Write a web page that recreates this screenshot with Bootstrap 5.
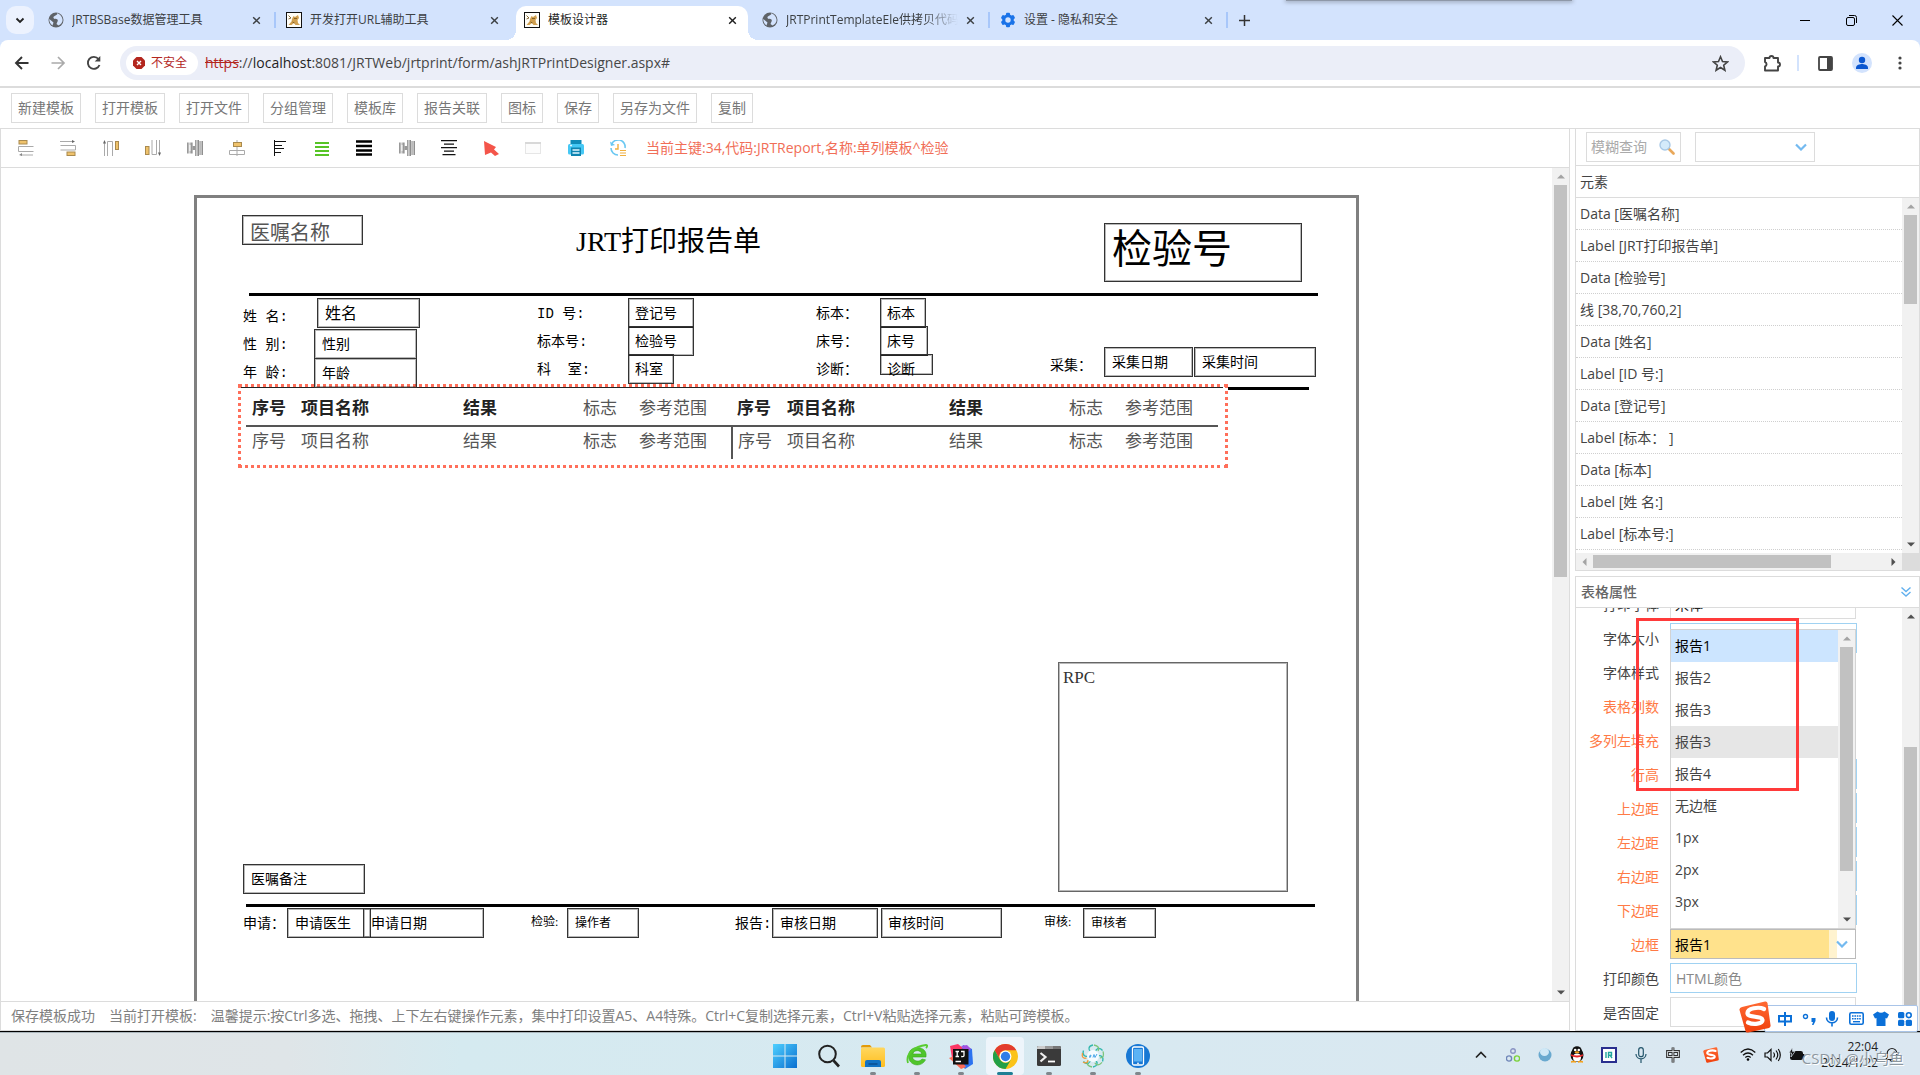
<!DOCTYPE html>
<html lang="zh-CN">
<head>
<meta charset="utf-8">
<meta name="viewport" content="width=device-width, initial-scale=1">
<title>模板设计器</title>
<link href="https://cdn.jsdelivr.net/npm/bootstrap@5.3.0/dist/css/bootstrap.min.css" rel="stylesheet">
<style>
:root{--ui:"Open Sans","Noto Sans CJK SC",sans-serif;--song:"Liberation Serif","Noto Sans CJK SC",serif;--songm:"Liberation Mono","Noto Sans CJK SC",monospace;--line:#dcdcdc}
body{font-family:var(--ui);font-size:14px;line-height:20px;color:#444}
svg{display:block;flex:none}
button{font-family:inherit}
.plain{border:0;background:none;padding:0;color:inherit}
/* browser frame */
.tabstrip{height:40px;background:#d3e3fd;padding-left:6px;color:#3c4043}
.tabsearch{width:28px;height:28px;border-radius:10px;background:#ecf2fe;margin-right:3px}
.btab{width:238px;height:40px;padding:0 14px 0 11px;gap:8px;font-size:12px;position:relative;align-items:center}
.btab .ttl{flex:1 1 0;min-width:0;overflow:hidden;white-space:nowrap;line-height:20px}
.btab>*{position:relative;z-index:1}
.btab.sep::after{content:"";position:absolute;right:-1px;top:12px;width:2px;height:16px;background:#a8c7fa}
.btab.act{color:#1f1f1f}
.btab.act::before{content:"";position:absolute;z-index:0;left:3px;right:3px;top:6px;bottom:0;background:#fff;border-radius:10px 10px 0 0}
.btab.act::after{content:"";position:absolute;z-index:0;left:-7px;right:-7px;bottom:0;height:10px;background:radial-gradient(circle at 0 0,transparent 10px,#fff 10px) left/10px 10px no-repeat,radial-gradient(circle at 100% 0,transparent 10px,#fff 10px) right/10px 10px no-repeat}
.fade-r{-webkit-mask-image:linear-gradient(90deg,#000 80%,transparent);mask-image:linear-gradient(90deg,#000 80%,transparent)}
.winctl{gap:35px;padding-right:17px}
.overtop{position:absolute;top:0;right:348px;width:286px;height:1px;background:#8e98a8;box-shadow:0 0 4px 1px #8e98a8}
.navrow{background:#d3e3fd}
.navbar-in{height:46px;background:#fff;border-radius:8px 8px 0 0;padding:0 14px;color:#474747}
.fwd{margin:0 20px}
.reload{margin-right:18px}
.omni{height:34px;border-radius:17px;background:#ebeef8;padding:0 16px 0 6px;min-width:0}
.chip{height:24px;width:72px;border-radius:12px;background:#fff;color:#b3261e;font-size:12px;gap:6px;padding-left:7px;margin-right:7px}
.url{color:#474747;white-space:nowrap}
.url b{font-weight:400;color:#1f1f1f}
.url s{color:#b3261e}
.extset{padding-left:18px}
.bar2{width:2px;height:16px;background:#d3e3fd;margin:0 19px 0 16px}
.avatar{margin:0 26px 0 19px}
/* designer */
.topbar{height:43px;border-top:2px solid var(--line);border-bottom:1px solid var(--line);padding:0 11px;gap:14px;background:#fff}
.tbtn{height:30px;padding:0 6px;border:1px solid var(--line);border-radius:0;background:#fff;color:#777;font-size:14px;line-height:26px;white-space:nowrap}
.workarea{min-height:0;gap:5px}
.leftpane{border:solid var(--line);border-width:0 1px 1px;min-width:0}
.icobar{height:39px;border-bottom:1px solid var(--line);padding:0 0 1px 17px}
.icoset{width:608px;margin-right:20px}
.cur{color:#f16e57}
.canvas{min-height:0;overflow:hidden}
.stage{min-width:0;overflow:hidden}
.statusbar{height:29px;border-top:1px solid var(--line);padding:0 10px;color:#808080;gap:14px;white-space:nowrap}
.vsb{width:17px;background:#f1f1f1;flex:none;color:#505050}
.thumb{width:13px;background:#c1c1c1}
.arw{height:17px;width:17px;display:flex;align-items:center;justify-content:center}
.arw.off{color:#a3a3a3}
.th-page{height:392px}.th-list{height:89px}.th-drop{height:224px}.th-form{height:270px;margin-top:122px}
/* report page */
.paper{width:1165px;height:1640px;margin:27px auto 0;border:3px solid #808080;position:relative;color:#000;font-family:var(--song);background:#fff}
.lab,.fld,.rule{position:absolute;white-space:pre}
.lab{line-height:20px;font-family:var(--songm)}
.fld{border:1px solid #333;outline:1px solid rgba(0,0,0,.28);outline-offset:-2px;height:30px;line-height:30px;padding-left:7px}
.rule{background:#000;height:3px}
.t12{font-size:12px;font-family:var(--song)}
#d-order{left:45px;top:17px;width:121px;font-size:20px;line-height:35px;color:#555}
#l-title{left:379px;top:28px;font-size:28px;line-height:32px;color:#000;font-family:var(--song)}
#d-no{left:907px;top:25px;width:198px;height:59px;font-size:40px;line-height:52px}
#r1{left:52px;top:95px;width:1069px}
#l-xm{left:46px;top:109px}#l-xb{left:46px;top:137px}#l-nl{left:46px;top:165px}
#d-xm{left:120px;top:100px;width:103px;font-size:16px}
#d-xb{left:117px;top:131px;width:103px}#d-nl{left:117px;top:160px;width:103px;z-index:1}
#l-id{left:340px;top:106px}#l-bbh{left:340px;top:134px}#l-ks{left:340px;top:162px}
#d-djh{left:431px;top:100px;width:66px;padding-left:6px}#d-jyh{left:431px;top:128px;width:66px;padding-left:6px}#d-ks{left:431px;top:156px;width:46px;padding-left:6px}
#l-bb{left:619px;top:106px}#l-ch{left:619px;top:134px}#l-zd{left:619px;top:162px}
#d-bb{left:683px;top:100px;width:46px;padding-left:6px}#d-ch{left:683px;top:128px;width:48px;padding-left:6px}#d-zd{left:683px;top:156px;width:53px;height:21px;padding-left:6px}
#l-cj{left:853px;top:158px}
#d-cjrq{left:907px;top:149px;width:89px}#d-cjsj{left:997px;top:149px;width:122px}
#r2{left:45px;top:189px;width:1067px}
.gridbox{position:absolute;left:41px;top:186px;width:990px;height:84px;border:3px dotted #ff6f5a;background:#fff;color:#444;font-size:17px;padding-left:5px}
.gridbox::before{content:"";position:absolute;left:0;right:2px;top:0;height:1px;background:#222}
.rtab{width:972px;table-layout:fixed;border-collapse:separate;border-spacing:0;color:#555}
.rtab th,.rtab td{padding:0 0 0 6px;font-weight:400;text-align:left;white-space:nowrap;line-height:24px}
.rtab th{height:40px;border-bottom:2px solid #555;padding-top:6px}
.rtab td{height:32px;padding-bottom:2px}
.rtab .hb{font-weight:700;color:#222}
.rtab .split{border-left:2px solid #555;padding-left:5px}
.c1{width:49px}.c2{width:162px}.c3{width:120px}.c4{width:56px}.c5{width:98px}.c6{width:50px}
#d-rpc{left:861px;top:464px;width:230px;height:230px;border-color:#666;padding-left:4px;font-size:17px;color:#333}
#d-bz{left:46px;top:666px;width:122px}
#r3{left:49px;top:706px;width:1069px}
#l-sq{left:46px;top:716px}#d-sqys{left:90px;top:710px;width:84px}#d-sqrq{left:166px;top:710px;width:121px}
#l-jy{left:334px;top:714px}#d-czz{left:370px;top:710px;width:72px;line-height:28px}
#l-bg{left:538px;top:716px}#d-shrq{left:575px;top:710px;width:106px}#d-shsj{left:684px;top:710px;width:121px;padding-left:6px}
#l-sh{left:847px;top:714px}#d-shz{left:886px;top:710px;width:73px;line-height:28px}
/* right column */
.rightpane{width:345px;gap:5px;position:relative;flex:none}
.pbox{border:1px solid var(--line);border-top:0;min-height:0}
.qbar{height:37px;border-bottom:1px solid var(--line);padding:3px 0 0 10px;gap:14px}
.qbox{width:95px;height:30px;border:1px solid var(--line);padding:0 5px 0 4px}
.qbox input{width:60px;border:0;padding:0;outline:0;background:none}
.qbox input::placeholder{color:#aaa}
.qsel{width:120px;height:30px;border:1px solid var(--line);border-radius:0;background:#fff;appearance:none;display:block}
.selwrap{position:relative}
.selwrap svg{position:absolute;right:8px;top:11px;pointer-events:none}
.eh{height:32px;border-bottom:1px solid var(--line);padding:6px 4px}
.elist{height:355px}
.elist ul{overflow:hidden;min-width:0}
.elist li{height:32px;border-bottom:1px dotted #cfcfcf;padding:6px 4px 0;white-space:pre}
.hsb{height:17px;background:#f1f1f1;color:#505050}
.hsb .thumb{height:13px;width:238px}
.corner{width:17px;background:#dcdcdc}
.phead{height:32px;border:solid var(--line);border-width:1px 0;padding:0 8px 0 5px;color:#666;font-weight:500}
.pbody{min-height:0;position:relative}
.pform{overflow:hidden;min-width:0}
.prow{height:30px;margin-bottom:4px;position:relative}
.prow:first-child{margin-top:-19px}
.prow label{width:84px;text-align:right;padding:2px 1px 0 0;margin-right:10px;white-space:nowrap}
.prow.hot label{color:#ff7a45}
.prow input{width:187px;height:30px;border:1px solid #a0d2f2;border-radius:0;padding:0 5px;color:#222;outline:0;background:#fff}
.prow input.cmb{width:186px;border-color:var(--line);padding:0 4px}
.prow input.on{border-color:#bbb;color:#000;background:linear-gradient(90deg,#ffe28c 158px,#fff3cf 158px,#fff3cf 166px,#fff 166px)}
.prow input::placeholder{color:#888;opacity:1}
.chev{position:absolute;left:260px;top:11px}
.droplist{position:absolute;z-index:3;left:94px;bottom:30px;width:186px;height:300px;border:1px solid #d3d3d3;background:#fff}
.droplist ul{min-width:0}
.droplist li{height:32px;padding:6px 4px}
.droplist .sel{background:#cce5ff;color:#000}
.droplist .hov{background:#e6e6e6}
.redbox{position:absolute;z-index:4;left:60px;top:10px;width:163px;height:173px;border:3px solid #ff3a3a}
.ime{position:absolute;z-index:5;right:2px;bottom:-1px;width:154px;height:27px;background:#fff;border:1px solid #a9c4e8;border-radius:2px;padding:0 5px 0 12px}
.ime .sg{position:absolute;left:-26px;bottom:-2px}
/* taskbar */
.taskbar{height:44px;border-top:1px solid #000;background:linear-gradient(90deg,#dfe4e6 0,#dfe5e8 15%,#d5eaf0 24%,#d8e9f1 60%,#dbe7f1 100%);box-shadow:inset 0 1px 0 #a9b4ba;position:relative;flex:none;padding-left:2px}
.apps{width:391px}
.app{width:38px;height:38px;margin-top:5px;border-radius:4px;position:relative;display:flex;align-items:center;justify-content:center}
.app.run::after{content:"";position:absolute;bottom:0;left:16px;width:6px;height:3px;border-radius:2px;background:#7f878c}
.app.cur-app{background:#eef5fb}
.app.cur-app::after{left:11px;width:16px;background:#1f7f95}
.tray{position:absolute;right:21px;top:2px;bottom:0;color:#222}
.trayset>span{width:32px;display:flex;justify-content:center}
.traysg{margin:0 21px 0 14px}
.sysset{gap:8px}
.clock{width:73px;text-align:right;font-size:12px;line-height:16px;color:#222;margin-right:7px}
.wm{position:absolute;right:-5px;top:14px;font-size:15px;line-height:20px;color:#8d979f;text-shadow:1px 1px 0 #fff;white-space:nowrap}
</style>
<script src="https://cdn.jsdelivr.net/npm/bootstrap@5.3.0/dist/js/bootstrap.bundle.min.js"></script>
</head>
<body class="vh-100 d-flex flex-column overflow-hidden m-0">
<svg width="0" height="0" class="position-absolute">
<defs>
<linearGradient id="gm" x1="0" x2="1"><stop offset="0" stop-color="#8a8a8a"/><stop offset=".45" stop-color="#d6d6d6"/><stop offset="1" stop-color="#777"/></linearGradient>
<linearGradient id="gw" x1="0" y1="0" x2="1" y2="1"><stop offset="0" stop-color="#4fd0ff"/><stop offset="1" stop-color="#0a6fd0"/></linearGradient>
<linearGradient id="gf" x1="0" y1="0" x2="0" y2="1"><stop offset="0" stop-color="#ffd75e"/><stop offset="1" stop-color="#ffbe1f"/></linearGradient>
<linearGradient id="gs" x1="0" y1="0" x2="0" y2="1"><stop offset="0" stop-color="#ff6a33"/><stop offset="1" stop-color="#f0400d"/></linearGradient>
<symbol id="x" viewBox="0 0 10 10"><path d="M1.300 1.300l7.400 7.400M8.700 1.300L1.300 8.700" stroke="currentColor" stroke-width="1.600" fill="none"/></symbol>
<symbol id="globe" viewBox="0 0 16 16"><circle cx="8" cy="8" r="7.500" fill="#5f6368"/><path d="M9 1.200c1 1-.5 1.800-1.500 2.300S5 4.500 5.500 6s3 .5 4 1.500S9 10.500 8.500 12l2 1.500C13 12.500 14.500 10.500 14.600 8 14.500 5 12 1.800 9 1.200zM1.300 7l4.200 3.500-1 3C2.500 12 1 9.500 1.300 7z" fill="#d3e3fd"/></symbol>
<symbol id="cat" viewBox="0 0 16 16"><rect x=".5" y=".5" width="15" height="15" fill="#fffef8" stroke="#111"/><path d="M7.500 4l1.500 1L12 3l1 3-1.500 2 .5 3 2 2h-4.500L8 11l-2.500 2H2.500L5.500 9.500 6 7z" fill="#d1a050"/><path d="M2.500 3.500L5 6l-2.500 1M8 6.500h3M6.500 10l2 1" stroke="#7a5a22" stroke-width=".9" fill="none"/></symbol>
<symbol id="up" viewBox="0 0 8 5"><path d="M0 4.500L4 .5l4 4z" fill="currentColor"/></symbol>
<symbol id="dn" viewBox="0 0 8 5"><path d="M0 .5l4 4 4-4z" fill="currentColor"/></symbol>
<symbol id="chv" viewBox="0 0 12 8"><path d="M1 1.500l5 5 5-5" fill="none" stroke="#74baf0" stroke-width="2.200"/></symbol>
<symbol id="cols" viewBox="0 0 16 16"><path d="M0 2.500h5.500v11H0z" fill="url(#gm)"/><path d="M2 5h1.500v6H2z" fill="#eee"/><rect x="5.500" y="6" width="3" height="4" fill="#999"/><rect x="8" y="0" width="4" height="16" fill="url(#gm)"/><rect x="12.500" y="1" width="3.500" height="14" fill="url(#gm)"/></symbol>
<symbol id="sogou" viewBox="0 0 32 32"><path d="M3 6L26 .5q2-.5 2.500 1.500l3 22q.5 2-1.500 3L9 31.500q-2 .5-2.500-1.500L.5 9Q0 7 3 6z" fill="url(#gs)"/><path d="M25 8C20 5.500 8 7 8.500 12.500 9 17 23 14.500 23.500 19c.3 4-9 5-14.500 2.500" fill="none" stroke="#fff" stroke-width="4.200" stroke-linecap="round"/></symbol>
</defs>
</svg>

<header class="flex-shrink-0 position-relative">
 <div class="tabstrip d-flex align-items-center">
  <button class="plain tabsearch d-flex align-items-center justify-content-center" aria-label="搜索标签页"><svg width="10" height="7" viewBox="0 0 10 7"><path d="M1.500 1.500L5 5l3.500-3.500" fill="none" stroke="#222" stroke-width="1.800"/></svg></button>
  <div class="btab sep d-flex"><svg width="16" height="16"><use href="#globe"/></svg><span class="ttl">JRTBSBase数据管理工具</span><button class="plain" aria-label="关闭"><svg width="9" height="9"><use href="#x"/></svg></button></div>
  <div class="btab d-flex"><svg width="16" height="16"><use href="#cat"/></svg><span class="ttl">开发打开URL辅助工具</span><button class="plain" aria-label="关闭"><svg width="9" height="9"><use href="#x"/></svg></button></div>
  <div class="btab act d-flex"><svg width="16" height="16"><use href="#cat"/></svg><span class="ttl">模板设计器</span><button class="plain" aria-label="关闭"><svg width="9" height="9"><use href="#x"/></svg></button></div>
  <div class="btab sep d-flex"><svg width="16" height="16"><use href="#globe"/></svg><span class="ttl fade-r">JRTPrintTemplateEle供拷贝代码</span><button class="plain" aria-label="关闭"><svg width="9" height="9"><use href="#x"/></svg></button></div>
  <div class="btab sep d-flex"><svg width="16" height="16" viewBox="0 0 16 16"><g fill="#1a73e8"><circle cx="8" cy="8" r="5.800"/><g id="tth"><rect x="6" y="0.800" width="4" height="14.400" rx="1"/></g><use href="#tth" transform="rotate(60 8 8)"/><use href="#tth" transform="rotate(120 8 8)"/></g><circle cx="8" cy="8" r="2.700" fill="#d3e3fd"/></svg><span class="ttl">设置 - 隐私和安全</span><button class="plain" aria-label="关闭"><svg width="9" height="9"><use href="#x"/></svg></button></div>
  <button class="plain ms-2 ps-1" aria-label="新标签页"><svg width="11" height="11" viewBox="0 0 11 11"><path d="M5.500 0v11M0 5.500h11" stroke="#333" stroke-width="1.500"/></svg></button>
  <div class="winctl ms-auto d-flex align-items-center">
   <button class="plain" aria-label="最小化"><svg width="11" height="11" viewBox="0 0 11 11"><path d="M0 5.500h10" stroke="#000"/></svg></button>
   <button class="plain" aria-label="还原"><svg width="11" height="11" viewBox="0 0 11 11"><rect x=".5" y="2.500" width="8" height="8" rx="1.500" fill="none" stroke="#000"/><path d="M3 .5h5.500a2 2 0 0 1 2 2V8" fill="none" stroke="#000"/></svg></button>
   <button class="plain" aria-label="关闭窗口"><svg width="11" height="11" viewBox="0 0 11 11"><path d="M.5.500l10 10M10.500.500l-10 10" stroke="#000" stroke-width="1.100"/></svg></button>
  </div>
 </div>
 <div class="overtop"></div>
 <div class="navrow"><div class="navbar-in d-flex align-items-center">
  <button class="plain" aria-label="后退"><svg width="16" height="16" viewBox="0 0 16 16"><path d="M14.500 8H2.500M8 2L2 8l6 6" fill="none" stroke="#333" stroke-width="1.900"/></svg></button>
  <button class="plain fwd" aria-label="前进"><svg width="16" height="16" viewBox="0 0 16 16"><path d="M1.500 8h12M8 2l6 6-6 6" fill="none" stroke="#aaa" stroke-width="1.700"/></svg></button>
  <button class="plain reload" aria-label="刷新"><svg width="16" height="16" viewBox="0 0 16 16"><path d="M13.500 10A6 6 0 1 1 12.500 4" fill="none" stroke="#444" stroke-width="1.900"/><path d="M14.300 1v5.600H8.700z" fill="#444"/></svg></button>
  <div class="omni flex-grow-1 d-flex align-items-center">
   <span class="chip d-flex align-items-center"><svg width="12" height="12" viewBox="0 0 12 12"><path d="M3.500 0h5L12 3.500v5L8.500 12h-5L0 8.500v-5z" fill="#b3261e"/><path d="M4 4l4 4M8 4l-4 4" stroke="#fff" stroke-width="1.400"/></svg>不安全</span>
   <span class="url flex-grow-1"><s>https</s>://<b>localhost</b>:8081/JRTWeb/jrtprint/form/ashJRTPrintDesigner.aspx#</span>
   <svg width="17" height="17" viewBox="0 0 17 17"><path d="M8.500 1.800l2 4.700 5 .4-3.800 3.300 1.200 5-4.400-2.700-4.400 2.700 1.200-5L1.500 6.900l5-.4z" fill="none" stroke="#444" stroke-width="1.600"/></svg>
  </div>
  <div class="extset d-flex align-items-center">
   <svg width="18" height="18" viewBox="0 0 18 18"><path d="M2 4h4.500a2 2 0 0 1 4 0H15v4.500a2 2 0 0 1 0 4V16.500H2v-4.200a2.200 2.200 0 0 0 0-4.200z" fill="none" stroke="#444" stroke-width="1.900" stroke-linejoin="round"/></svg>
   <span class="bar2"></span>
   <svg width="15" height="15" viewBox="0 0 15 15"><rect x="1" y="1" width="13" height="13" rx="1" fill="none" stroke="#444" stroke-width="1.800"/><path d="M9 1h5v13H9z" fill="#444"/></svg>
   <svg class="avatar" width="20" height="20" viewBox="0 0 20 20"><circle cx="10" cy="10" r="10" fill="#d3e3fd"/><circle cx="10" cy="7" r="3.200" fill="#0b57d0"/><path d="M4 16v-1.500C4 12 8 11 10 11s6 1 6 3.500V16z" fill="#0b57d0"/></svg>
   <svg width="4" height="14" viewBox="0 0 4 14" class="me-1"><g fill="#444"><circle cx="2" cy="2" r="1.600"/><circle cx="2" cy="7" r="1.600"/><circle cx="2" cy="12" r="1.600"/></g></svg>
  </div>
 </div></div>
</header>

<nav class="topbar d-flex align-items-center flex-shrink-0">
 <button class="tbtn">新建模板</button><button class="tbtn">打开模板</button><button class="tbtn">打开文件</button><button class="tbtn">分组管理</button><button class="tbtn">模板库</button><button class="tbtn">报告关联</button><button class="tbtn">图标</button><button class="tbtn">保存</button><button class="tbtn">另存为文件</button><button class="tbtn">复制</button>
</nav>

<main class="workarea flex-grow-1 d-flex">
 <section class="leftpane flex-grow-1 d-flex flex-column">
  <div class="icobar d-flex align-items-center flex-shrink-0">
   <div class="icoset d-flex justify-content-between">
    <svg width="16" height="16" viewBox="0 0 16 16"><rect x="1" y=".5" width="8" height="3.500" fill="#efc26c" stroke="#a98a4e"/><path d="M15.500 6.500H.5v5h15M15 15H3" fill="none" stroke="#aaa"/><path d="M1 15l3-2v3z" fill="#888"/></svg>
    <svg width="16" height="16" viewBox="0 0 16 16"><path d="M0 1.500h13M.5 5.500h15v4.500H.5" fill="none" stroke="#aaa"/><path d="M15 1.500L12 0v3z" fill="#666"/><rect x="7" y="12" width="8" height="3.500" fill="#efc26c" stroke="#a98a4e"/></svg>
    <svg width="16" height="16" viewBox="0 0 16 16"><path d="M1.500 16V3M4.500 16V1.500h5V16" fill="none" stroke="#aaa"/><path d="M1.500 0L0 3.500h3z" fill="#666"/><rect x="12.500" y="1.500" width="3" height="8" fill="#efc26c" stroke="#a98a4e"/></svg>
    <svg width="16" height="16" viewBox="0 0 16 16"><path d="M14.500 0v13M7 0v14.500h4.500V0" fill="none" stroke="#aaa"/><path d="M14.500 16L13 12.500h3z" fill="#666"/><rect x=".5" y="6.500" width="3.500" height="8" fill="#efc26c" stroke="#a98a4e"/></svg>
    <svg width="16" height="16"><use href="#cols"/></svg>
    <svg width="16" height="16" viewBox="0 0 16 16"><path d="M8 0v16M.5 14.500v-4h15v4z" fill="none" stroke="#aaa"/><rect x="4.500" y="2.500" width="8" height="4" fill="#efc26c" stroke="#a98a4e"/></svg>
    <svg width="16" height="16" viewBox="0 0 16 16"><path d="M2.500 0v16M2 1.500h12M2 5.500h8M2 8.500h10M2 12.500h7" fill="none" stroke="#111"/></svg>
    <svg width="16" height="16" viewBox="0 0 16 16"><path d="M1 3h14M1 7h14M1 11h14M1 15h14" stroke="#57c426" stroke-width="2"/></svg>
    <svg width="16" height="16" viewBox="0 0 16 16"><path d="M0 1.500h16M0 6h16M0 10.500h16M0 14.500h16" stroke="#000" stroke-width="2.500"/></svg>
    <svg width="16" height="16"><use href="#cols"/></svg>
    <svg width="16" height="16" viewBox="0 0 16 16"><path d="M0 .7h16M3 4.200h10M0 7.700h16M3 11.200h10M1.500 14.700h13" stroke="#111" stroke-width="1.300"/></svg>
    <svg width="16" height="16" viewBox="0 0 16 16"><path d="M1 1l12 6-2 2.500 5 4.500-4 2-4-3.500L2 15z" fill="#f4554a"/></svg>
    <svg width="16" height="16" viewBox="0 0 16 16"><rect x=".5" y="2.500" width="15" height="11" fill="#fcfcfc" stroke="#e6e6e6"/><path d="M0 3h16" stroke="#d8d8d8" stroke-width="2"/></svg>
    <svg width="16" height="16" viewBox="0 0 16 16"><path d="M2.500 0h11v4h-11z" fill="#118bb8"/><rect x="0" y="4" width="16" height="10.500" rx="1.500" fill="#46c8f5"/><path d="M3 7.500h10V16H3z" fill="#0f84b0"/><path d="M4.500 10h7M4.500 13h7M2 5.500h2" stroke="#dff5ff" stroke-width="1.300"/></svg>
    <svg width="16" height="16" viewBox="0 0 16 16"><path d="M1.500 4.500A7 7 0 0 1 15 8M8 15A7 7 0 0 1 1 8" fill="none" stroke="#6ac8f2" stroke-width="1.600"/><path d="M0 1.500l1 4.500 4-1z" fill="#6ac8f2"/><path d="M8 4v5H5" fill="none" stroke="#f0b040" stroke-width="1.400"/><path d="M10 10.500h6M10 13h6M10 15.500h6" stroke="#f0b040" stroke-width="1.200"/></svg>
   </div>
   <span class="cur">当前主键:34,代码:JRTReport,名称:单列模板^检验</span>
  </div>
  <div class="canvas flex-grow-1 d-flex">
   <div class="stage flex-grow-1">
    <div class="paper">
     <div class="fld" id="d-order">医嘱名称</div>
     <div class="lab" id="l-title">JRT打印报告单</div>
     <div class="fld" id="d-no">检验号</div>
     <div class="rule" id="r1"></div>
     <div class="lab" id="l-xm">姓 名:</div><div class="lab" id="l-xb">性 别:</div><div class="lab" id="l-nl">年 龄:</div>
     <div class="fld" id="d-xm">姓名</div><div class="fld" id="d-xb">性别</div><div class="fld" id="d-nl">年龄</div>
     <div class="lab" id="l-id">ID 号:</div><div class="lab" id="l-bbh">标本号:</div><div class="lab" id="l-ks">科  室:</div>
     <div class="fld" id="d-djh">登记号</div><div class="fld" id="d-jyh">检验号</div><div class="fld" id="d-ks">科室</div>
     <div class="lab" id="l-bb">标本：</div><div class="lab" id="l-ch">床号：</div><div class="lab" id="l-zd">诊断：</div>
     <div class="fld" id="d-bb">标本</div><div class="fld" id="d-ch">床号</div><div class="fld" id="d-zd">诊断</div>
     <div class="lab" id="l-cj">采集：</div>
     <div class="fld" id="d-cjrq">采集日期</div><div class="fld" id="d-cjsj">采集时间</div>
     <div class="rule" id="r2"></div>
     <div class="gridbox">
      <table class="rtab">
       <colgroup><col class="c1"><col class="c2"><col class="c3"><col class="c4"><col class="c5"><col class="c6"><col class="c2"><col class="c3"><col class="c4"><col></colgroup>
       <thead><tr><th class="hb">序号</th><th class="hb">项目名称</th><th class="hb">结果</th><th>标志</th><th>参考范围</th><th class="hb">序号</th><th class="hb">项目名称</th><th class="hb">结果</th><th>标志</th><th>参考范围</th></tr></thead>
       <tbody><tr><td>序号</td><td>项目名称</td><td>结果</td><td>标志</td><td>参考范围</td><td class="split">序号</td><td>项目名称</td><td>结果</td><td>标志</td><td>参考范围</td></tr></tbody>
      </table>
     </div>
     <div class="fld" id="d-rpc">RPC</div>
     <div class="fld" id="d-bz">医嘱备注</div>
     <div class="rule" id="r3"></div>
     <div class="lab" id="l-sq">申请：</div><div class="fld" id="d-sqys">申请医生</div><div class="fld" id="d-sqrq">申请日期</div>
     <div class="lab t12" id="l-jy">检验:</div><div class="fld t12" id="d-czz">操作者</div>
     <div class="lab" id="l-bg">报告:</div><div class="fld" id="d-shrq">审核日期</div><div class="fld" id="d-shsj">审核时间</div>
     <div class="lab t12" id="l-sh">审核:</div><div class="fld t12" id="d-shz">审核者</div>
    </div>
   </div>
   <div class="vsb d-flex flex-column align-items-center">
    <span class="arw off"><svg width="8" height="5"><use href="#up"/></svg></span><span class="thumb th-page"></span>
    <span class="arw mt-auto"><svg width="8" height="5"><use href="#dn"/></svg></span>
   </div>
  </div>
  <footer class="statusbar d-flex align-items-center flex-shrink-0"><span>保存模板成功</span><span>当前打开模板:</span><span>温馨提示:按Ctrl多选、拖拽、上下左右键操作元素，集中打印设置A5、A4特殊。Ctrl+C复制选择元素，Ctrl+V粘贴选择元素，粘贴可跨模板。</span></footer>
 </section>

 <aside class="rightpane d-flex flex-column">
  <div class="pbox flex-shrink-0">
   <div class="qbar d-flex align-items-start">
    <div class="qbox d-flex align-items-center justify-content-between"><input type="text" placeholder="模糊查询" aria-label="模糊查询"><svg width="16" height="16" viewBox="0 0 16 16"><path d="M9.500 9.500l5 5" stroke="#e9a85a" stroke-width="2.600" stroke-linecap="round"/><circle cx="6" cy="6" r="5" fill="#d4ebfb" stroke="#a9c9e6" stroke-width="1.400"/></svg></div>
    <div class="selwrap"><select class="qsel" aria-label="类型"><option></option></select><svg width="12" height="8"><use href="#chv"/></svg></div>
   </div>
   <div class="eh">元素</div>
   <div class="elist d-flex">
    <ul class="list-unstyled m-0 flex-grow-1"><li>Data [医嘱名称]</li><li>Label [JRT打印报告单]</li><li>Data [检验号]</li><li>线 [38,70,760,2]</li><li>Data [姓名]</li><li>Label [ID 号:]</li><li>Data [登记号]</li><li>Label [标本： ]</li><li>Data [标本]</li><li>Label [姓 名:]</li><li>Label [标本号:]</li></ul>
    <div class="vsb d-flex flex-column align-items-center"><span class="arw off"><svg width="8" height="5"><use href="#up"/></svg></span><span class="thumb th-list"></span><span class="arw mt-auto"><svg width="8" height="5"><use href="#dn"/></svg></span></div>
   </div>
   <div class="d-flex">
    <div class="hsb d-flex align-items-center flex-grow-1"><span class="arw off"><svg width="5" height="8" viewBox="0 0 5 8"><path d="M4.500 0l-4 4 4 4z" fill="currentColor"/></svg></span><span class="thumb"></span><span class="arw ms-auto"><svg width="5" height="8" viewBox="0 0 5 8"><path d="M.5 0l4 4-4 4z" fill="currentColor"/></svg></span></div><div class="corner"></div>
   </div>
  </div>
  <div class="pbox flex-grow-1 d-flex flex-column">
   <div class="phead d-flex align-items-center justify-content-between flex-shrink-0"><span>表格属性</span><svg width="10" height="10" viewBox="0 0 10 10"><path d="M.5.500L5 4.500 9.500.500M.5 5L5 9l4.500-4" fill="none" stroke="#62b0ee" stroke-width="1.400"/></svg></div>
   <div class="pbody flex-grow-1 d-flex">
    <form class="pform flex-grow-1">
     <div class="prow d-flex align-items-center"><label for="p0">打印字体</label><input class="cmb" id="p0" value="宋体"></div>
     <div class="prow d-flex align-items-center"><label for="p1">字体大小</label><input id="p1"></div>
     <div class="prow d-flex align-items-center"><label for="p2">字体样式</label><input class="cmb" id="p2"></div>
     <div class="prow hot d-flex align-items-center"><label for="p3">表格列数</label><input class="cmb" id="p3"></div>
     <div class="prow hot d-flex align-items-center"><label for="p4">多列左填充</label><input class="cmb" id="p4"></div>
     <div class="prow hot d-flex align-items-center"><label for="p5">行高</label><input id="p5"></div>
     <div class="prow hot d-flex align-items-center"><label for="p6">上边距</label><input id="p6"></div>
     <div class="prow hot d-flex align-items-center"><label for="p7">左边距</label><input id="p7"></div>
     <div class="prow hot d-flex align-items-center"><label for="p8">右边距</label><input id="p8"></div>
     <div class="prow hot d-flex align-items-center"><label for="p9">下边距</label><input id="p9"></div>
     <div class="prow hot d-flex align-items-center"><label for="p10">边框</label><input class="cmb on" id="p10" value="报告1"><svg class="chev" width="12" height="8"><use href="#chv"/></svg>
      <div class="droplist d-flex">
       <ul class="list-unstyled m-0 flex-grow-1"><li class="sel">报告1</li><li>报告2</li><li>报告3</li><li class="hov">报告3</li><li>报告4</li><li>无边框</li><li>1px</li><li>2px</li><li>3px</li></ul>
       <div class="vsb d-flex flex-column align-items-center"><span class="arw off"><svg width="8" height="5"><use href="#up"/></svg></span><span class="thumb th-drop"></span><span class="arw mt-auto"><svg width="8" height="5"><use href="#dn"/></svg></span></div>
      </div>
     </div>
     <div class="prow d-flex align-items-center"><label for="p11">打印颜色</label><input id="p11" placeholder="HTML颜色"></div>
     <div class="prow d-flex align-items-center mb-0"><label for="p12">是否固定</label><input class="cmb" id="p12"></div>
    </form>
    <div class="vsb d-flex flex-column align-items-center"><span class="arw"><svg width="8" height="5"><use href="#up"/></svg></span><span class="thumb th-form"></span></div>
    <div class="redbox"></div>
   </div>
  </div>
  <div class="ime d-flex align-items-center justify-content-between">
   <svg class="sg" width="32" height="32"><use href="#sogou"/></svg>
   <svg width="16" height="16" viewBox="0 0 16 16"><path d="M2 5h12v5.500H2zM8 1v14" fill="none" stroke="#0b70d8" stroke-width="2"/></svg>
   <svg width="14" height="14" viewBox="0 0 14 14"><circle cx="3.500" cy="4.500" r="2" fill="none" stroke="#0b70d8" stroke-width="1.400"/><path d="M9.500 6h4v3l-2 4h-1.500l1-3H9.500z" fill="#0b70d8"/></svg>
   <svg width="14" height="16" viewBox="0 0 14 16"><rect x="4" y="0" width="6" height="10" rx="3" fill="#0b70d8"/><path d="M1.500 6.500c0 7 11 7 11 0M7 12v3.500" fill="none" stroke="#0b70d8" stroke-width="1.600"/></svg>
   <svg width="15" height="13" viewBox="0 0 15 13"><rect x=".8" y=".8" width="13.400" height="11.400" rx="1.500" fill="none" stroke="#0b70d8" stroke-width="1.600"/><path d="M3 4h9M3 6.700h9" stroke="#0b70d8" stroke-width="1.600" stroke-dasharray="1.600 .8"/><path d="M4 9.700h7" stroke="#0b70d8" stroke-width="1.400"/></svg>
   <svg width="16" height="15" viewBox="0 0 16 15"><path d="M4.500.500Q8 3 11.500.500L16 3.500 14 7.500l-1.500-.5V15h-9V7L2 7.500 0 3.500z" fill="#0b70d8"/></svg>
   <svg width="14" height="14" viewBox="0 0 14 14"><g fill="#0b70d8"><rect width="6.300" height="6.300" rx="1.500"/><rect y="7.700" width="6.300" height="6.300" rx="1.500"/><rect x="7.700" y="7.700" width="6.300" height="6.300" rx="1.500"/></g><circle cx="10.800" cy="3.200" r="2.400" fill="none" stroke="#0b70d8" stroke-width="1.600"/></svg>
  </div>
 </aside>
</main>

<footer class="taskbar d-flex justify-content-center">
 <div class="apps d-flex justify-content-between">
  <div class="app"><svg width="24" height="24" viewBox="0 0 24 24"><path d="M0 0h11.500v11.500H0zM12.500 0H24v11.500H12.500zM0 12.500h11.500V24H0zM12.500 12.500H24V24H12.500z" fill="url(#gw)"/></svg></div>
  <div class="app"><svg width="24" height="24" viewBox="0 0 24 24"><circle cx="10.500" cy="10" r="8.300" fill="none" stroke="#222" stroke-width="2"/><path d="M16.500 16.500l5.500 6" stroke="#222" stroke-width="2.600"/></svg></div>
  <div class="app run"><svg width="26" height="24" viewBox="0 0 26 24"><path d="M1 3q0-2 2-2h7l2 2.500H1z" fill="#e39a08"/><rect x="1" y="3.500" width="24" height="19.500" rx="1.500" fill="url(#gf)"/><path d="M5 23v-5q0-2 2-2h12q2 0 2 2v5z" fill="#1273c4"/><path d="M8.500 20h9" stroke="#0b4f92" stroke-width="1.500"/></svg></div>
  <div class="app run"><svg width="24" height="24" viewBox="0 0 24 24"><path d="M21 13H7.500c.5 4.500 7 5.500 9.500 2l3.500.8C16.500 24 3.500 22 3.500 12S17 1 20.500 8q1 2 .5 5zM7.800 10h9c-1-4.500-8-4.500-9 0z" fill="#4fc52b" stroke="#3aa71e" stroke-width=".6"/><path d="M3 19C0 10 10 2 21 1c2 0 1 2 0 3" fill="none" stroke="#59cc30" stroke-width="1.800"/></svg></div>
  <div class="app run"><svg width="26" height="25" viewBox="0 0 26 25"><path d="M2 2l8-2 6 5-3 8-9 1z" fill="#fc3765"/><path d="M15 1l9 4 1 15-8 5-5-6z" fill="#2c73f0"/><path d="M1 14l8-3 9 12-5 2z" fill="#fb6a55"/><path d="M13 2l6-1 4 4-4 4z" fill="#a452e0"/><rect x="5" y="5" width="15.500" height="15.500" fill="#111"/><path d="M7.500 7.500h3.500M9.200 7.500v5M7.500 12.500h3.500M13 7.500h3v4q0 1.500-2.800 1M7.500 17.500h5.500" fill="none" stroke="#fff" stroke-width="1.300"/></svg></div>
  <div class="app run cur-app"><svg width="25" height="25" viewBox="0 0 24 24"><circle cx="12" cy="12" r="12" fill="#fbc31a"/><path d="M1.600 6A12 12 0 0 1 22.400 6H12a6 6 0 0 0-5.200 9z" fill="#e33b2e"/><path d="M1.600 6A12 12 0 0 0 12 24l5.200-9a6 6 0 0 1-10.400 0z" fill="#23a047"/><circle cx="12" cy="12" r="5.700" fill="#fff"/><circle cx="12" cy="12" r="4.500" fill="#2f7de8"/></svg></div>
  <div class="app run"><svg width="24" height="20" viewBox="0 0 24 20"><rect width="24" height="20" rx="1.500" fill="#3a3a3a"/><path d="M0 3V1.500Q0 0 1.500 0H8v3z" fill="#ccc"/><path d="M8 0h8v3H8z" fill="#999"/><path d="M16 0h6.500Q24 0 24 1.500V3h-8z" fill="#777"/><path d="M3.500 7l5 4-5 4.500" fill="none" stroke="#eee" stroke-width="2.200"/><path d="M11 15.500h7" stroke="#fff" stroke-width="1.800"/></svg></div>
  <div class="app run"><svg width="24" height="24" viewBox="0 0 24 24"><g fill="none" stroke-width="1.300"><g id="pet"><path d="M12 1C7 2 7 6 10 8" stroke="#33b8ae"/></g><use href="#pet" transform="rotate(60 12 12)"/><use href="#pet" transform="rotate(120 12 12)"/><use href="#pet" transform="rotate(180 12 12)"/><use href="#pet" transform="rotate(240 12 12)"/><use href="#pet" transform="rotate(300 12 12)"/><g id="pe2"><path d="M13 1c4 1 6 3 4 6" stroke="#7cc47a"/></g><use href="#pe2" transform="rotate(60 12 12)"/><use href="#pe2" transform="rotate(120 12 12)"/><use href="#pe2" transform="rotate(180 12 12)"/><path d="M1.500 9c-1 4 1 6 4 5M2 18c3 2 5 0 5-2" stroke="#f19a38"/></g><circle cx="12" cy="12" r="6" fill="#f4fbff"/><path d="M8 13q2 1 2-2-2 0-1 2.500M12 13.500l1-3 1 3 2-3.500" fill="none" stroke="#4aa7ea"/></svg></div>
  <div class="app run"><svg width="24" height="24" viewBox="0 0 24 24"><circle cx="12" cy="12" r="12" fill="#1878d4"/><rect x="6.500" y="3" width="11" height="18" rx="1.500" fill="#1878d4" stroke="#fff" stroke-width="1.300"/><rect x="8" y="5" width="8" height="12.500" fill="#5cb3f5"/><circle cx="12" cy="19.300" r=".9" fill="#fff"/></svg></div>
 </div>
 <div class="tray d-flex align-items-center">
  <div class="trayset d-flex align-items-center">
   <span><svg width="12" height="8" viewBox="0 0 12 8"><path d="M1 6.500l5-5 5 5" fill="none" stroke="#222" stroke-width="1.700"/></svg></span>
   <span><svg width="14" height="14" viewBox="0 0 14 14"><g fill="none" stroke-width="1.400"><circle cx="7" cy="3" r="2.300" stroke="#8a94c4"/><circle cx="3" cy="10.500" r="2.600" stroke="#6f86b8"/><circle cx="11" cy="10.500" r="2.600" stroke="#7bd23a"/></g></svg></span>
   <span><svg width="14" height="15" viewBox="0 0 14 15"><circle cx="7" cy="8" r="6.500" fill="#69a9cf"/><ellipse cx="6.500" cy="5" rx="4.500" ry="4" fill="#cfe8f6"/></svg></span>
   <span><svg width="16" height="17" viewBox="0 0 16 17"><ellipse cx="8" cy="9" rx="6.500" ry="7" fill="#111"/><circle cx="8" cy="5" r="4.800" fill="#111"/><ellipse cx="8" cy="11.500" rx="4" ry="4" fill="#fff"/><circle cx="6.200" cy="4" r="1.300" fill="#fff"/><circle cx="9.800" cy="4" r="1.300" fill="#fff"/><ellipse cx="8" cy="6.300" rx="2.500" ry="1" fill="#f6a21a"/><path d="M2 8.300q6 2.600 12 0v1.800q-6 2.600-12 0z" fill="#e8262a"/><path d="M2 16q2-2 5 0zM9 16q3-2 5 0z" fill="#f6a21a" stroke="#f6a21a"/></svg></span>
   <span><svg width="16" height="16" viewBox="0 0 16 16"><rect x="1" y="1" width="14" height="14" fill="#fff" stroke="#2a2f8f" stroke-width="2"/><path d="M5 5v6M7.500 11V5.500h3v2.700h-3M9 8.200l2 2.800" fill="none" stroke="#22a79e" stroke-width="1.400"/></svg></span>
   <span><svg width="12" height="16" viewBox="0 0 12 16"><rect x="3.700" y=".7" width="4.600" height="9" rx="2.300" fill="none" stroke="#23556b" stroke-width="1.200"/><path d="M1 7c0 6.500 10 6.500 10 0M6 12v4" fill="none" stroke="#23556b" stroke-width="1.200"/></svg></span>
   <span><svg width="14" height="16" viewBox="0 0 14 16"><path d="M1.500 4.500h11v5h-11zM7 .5v15" fill="none" stroke="#333" stroke-width="2.800"/><path d="M1.500 4.500h11v5h-11zM7 1v14" fill="none" stroke="#eef4f8" stroke-width=".8"/></svg></span>
  </div>
  <svg class="traysg" width="16" height="16"><use href="#sogou"/></svg>
  <div class="sysset d-flex align-items-center">
   <svg width="16" height="13" viewBox="0 0 16 13"><path d="M.7 4.500q7.300-7 14.600 0M3 7.200q5-4.500 10 0M5.300 9.500q2.700-2.200 5.400 0" fill="none" stroke="#111" stroke-width="1.300"/><circle cx="8" cy="11.500" r="1.300"/></svg>
   <svg width="17" height="14" viewBox="0 0 17 14"><path d="M1 5h2.500L7 1.500v11L3.500 9H1zM9.500 4.500q2 2.500 0 5M12 2.500q3.500 4.500 0 9M14.300 1q4 6 0 12" fill="none" stroke="#111" stroke-width="1.200"/></svg>
   <svg width="16" height="13" viewBox="0 0 16 13"><rect x="1.700" y="3.700" width="11.600" height="7.600" rx="1.500" fill="#111" stroke="#111" stroke-width="1.400"/><path d="M14.500 6v3.500" stroke="#111" stroke-width="1.600"/><path d="M3.500-.5L0 5h2.500L2 9l4-5.500H3.500z" fill="#111" stroke="#dbe7f1" stroke-width=".7"/></svg>
  </div>
  <div class="clock">22:04<br>2024/1/22</div>
  <svg width="14" height="16" viewBox="0 0 14 16"><path d="M7 1.500a4.800 4.800 0 0 0-4.800 4.800V10L1 12.500h12L11.800 10V6.300A4.800 4.800 0 0 0 7 1.500zM5 13q2 3 4 0" fill="none" stroke="#222" stroke-width="1.200"/></svg>
  <div class="wm">CSDN @小乌鱼</div>
 </div>
</footer>
</body>
</html>
